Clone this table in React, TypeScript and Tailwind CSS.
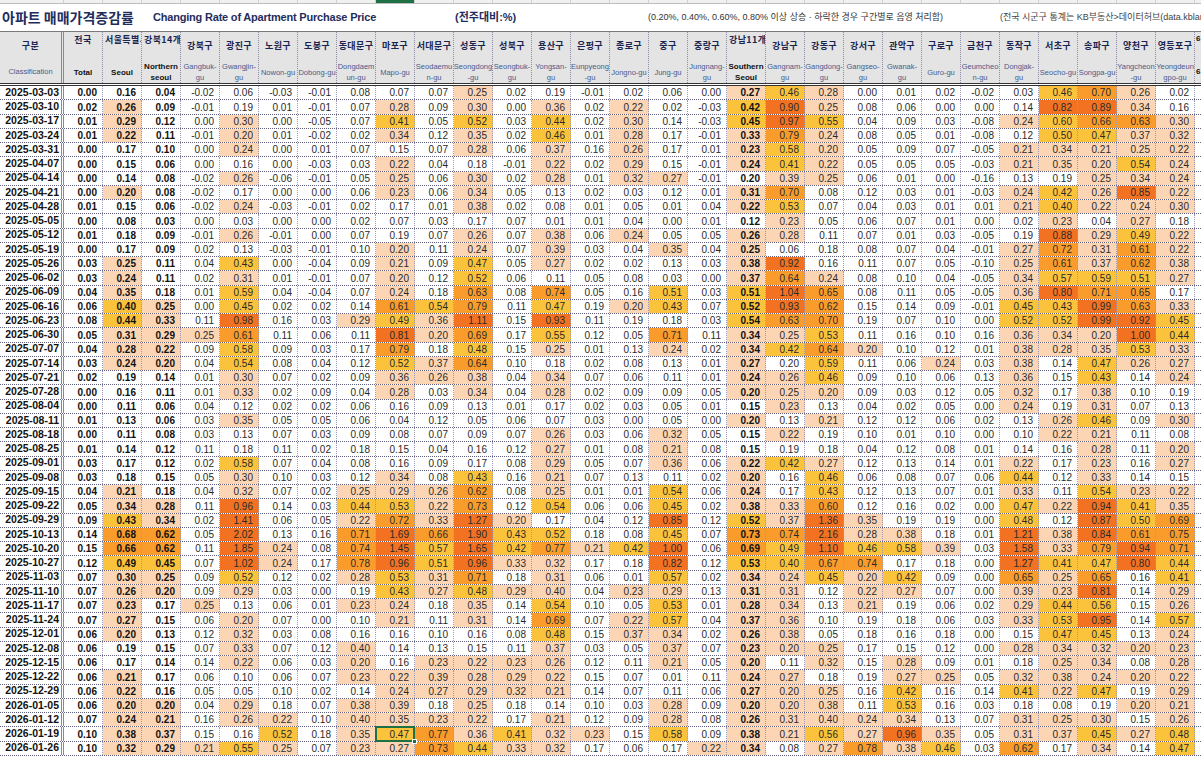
import React from 'react';

type Col = { ko: string; en: string[]; top?: boolean };

const COLS: Col[] = [
  { ko: '전국', en: ['Total'], top: true },
  { ko: '서울특별시', en: ['Seoul'], top: true },
  { ko: '강북14개구', en: ['Northern', 'seoul'], top: true },
  { ko: '강북구', en: ['Gangbuk-', 'gu'] },
  { ko: '광진구', en: ['Gwangjin-', 'gu'] },
  { ko: '노원구', en: ['Nowon-gu'] },
  { ko: '도봉구', en: ['Dobong-gu'] },
  { ko: '동대문구', en: ['Dongdaem', 'un-gu'] },
  { ko: '마포구', en: ['Mapo-gu'] },
  { ko: '서대문구', en: ['Seodaemu', 'n-gu'] },
  { ko: '성동구', en: ['Seongdong', '-gu'] },
  { ko: '성북구', en: ['Seongbuk-', 'gu'] },
  { ko: '용산구', en: ['Yongsan-', 'gu'] },
  { ko: '은평구', en: ['Eunpyeong', '-gu'] },
  { ko: '종로구', en: ['Jongno-gu'] },
  { ko: '중구', en: ['Jung-gu'] },
  { ko: '중랑구', en: ['Jungnang-', 'gu'] },
  { ko: '강남11개구', en: ['Southern', 'Seoul'], top: true },
  { ko: '강남구', en: ['Gangnam-', 'gu'] },
  { ko: '강동구', en: ['Gangdong-', 'gu'] },
  { ko: '강서구', en: ['Gangseo-', 'gu'] },
  { ko: '관악구', en: ['Gwanak-', 'gu'] },
  { ko: '구로구', en: ['Guro-gu'] },
  { ko: '금천구', en: ['Geumcheo', 'n-gu'] },
  { ko: '동작구', en: ['Dongjak-', 'gu'] },
  { ko: '서초구', en: ['Seocho-gu'] },
  { ko: '송파구', en: ['Songpa-gu'] },
  { ko: '양천구', en: ['Yangcheon', '-gu'] },
  { ko: '영등포구', en: ['Yeongdeun', 'gpo-gu'] },
];

const BOLD = new Set([0, 1, 2, 17]);

const RAW = `2025-03-03 0.00 0.16 0.04 -0.02 0.06 -0.03 -0.01 0.08 0.07 0.07 0.25 0.02 0.19 -0.01 0.02 0.06 0.00 0.27 0.46 0.28 0.00 0.01 0.02 -0.02 0.03 0.46 0.70 0.26 0.02
2025-03-10 0.02 0.26 0.09 -0.01 0.19 0.01 -0.01 0.07 0.28 0.09 0.30 0.00 0.36 0.02 0.22 0.02 -0.03 0.42 0.90 0.25 0.08 0.06 0.00 0.00 0.14 0.82 0.89 0.34 0.16
2025-03-17 0.01 0.29 0.12 0.00 0.30 0.00 -0.05 0.07 0.41 0.05 0.52 0.03 0.44 0.02 0.30 0.14 -0.03 0.45 0.97 0.55 0.04 0.09 0.03 -0.08 0.24 0.60 0.66 0.63 0.30
2025-03-24 0.01 0.22 0.11 -0.01 0.20 0.01 -0.02 0.02 0.34 0.12 0.35 0.02 0.46 0.01 0.28 0.17 -0.01 0.33 0.79 0.24 0.08 0.05 0.01 -0.08 0.12 0.50 0.47 0.37 0.32
2025-03-31 0.00 0.17 0.10 0.00 0.24 0.00 0.01 0.07 0.15 0.07 0.28 0.06 0.37 0.16 0.26 0.17 0.01 0.23 0.58 0.20 0.05 0.09 0.07 -0.05 0.21 0.34 0.21 0.25 0.22
2025-04-07 0.00 0.15 0.06 0.00 0.16 0.00 -0.03 0.03 0.22 0.04 0.18 -0.01 0.22 0.02 0.29 0.15 -0.01 0.24 0.41 0.22 0.05 0.05 0.05 -0.03 0.21 0.35 0.20 0.54 0.24
2025-04-14 0.00 0.14 0.08 -0.02 0.26 -0.06 -0.01 0.05 0.25 0.06 0.30 0.02 0.28 0.01 0.32 0.27 -0.01 0.20 0.39 0.25 0.06 0.01 0.00 -0.16 0.13 0.19 0.25 0.34 0.24
2025-04-21 0.00 0.20 0.08 -0.02 0.17 0.00 0.00 0.06 0.23 0.06 0.34 0.05 0.13 0.02 0.03 0.12 0.01 0.31 0.70 0.08 0.12 0.03 0.01 -0.03 0.24 0.42 0.26 0.85 0.22
2025-04-28 0.01 0.15 0.06 -0.02 0.24 -0.03 -0.01 0.02 0.17 0.01 0.38 0.02 0.08 0.01 0.05 0.01 0.04 0.22 0.53 0.07 0.04 0.03 0.01 0.01 0.21 0.40 0.22 0.24 0.30
2025-05-05 0.00 0.08 0.03 0.00 0.03 0.00 0.00 0.02 0.07 0.03 0.17 0.07 0.01 0.01 0.04 0.00 0.01 0.12 0.23 0.05 0.06 0.07 0.01 0.00 0.02 0.23 0.04 0.27 0.18
2025-05-12 0.01 0.18 0.09 -0.01 0.26 -0.01 0.00 0.07 0.19 0.07 0.26 0.07 0.38 0.06 0.24 0.05 0.05 0.26 0.28 0.11 0.07 0.01 0.03 -0.05 0.19 0.88 0.29 0.49 0.22
2025-05-19 0.00 0.17 0.09 0.02 0.13 -0.03 -0.01 0.10 0.20 0.11 0.24 0.07 0.39 0.03 0.04 0.35 0.04 0.25 0.06 0.18 0.08 0.07 0.04 -0.01 0.27 0.72 0.31 0.61 0.22
2025-05-26 0.03 0.25 0.11 0.04 0.43 0.00 -0.04 0.09 0.21 0.09 0.47 0.05 0.27 0.02 0.02 0.13 0.03 0.38 0.92 0.16 0.11 0.07 0.05 -0.10 0.25 0.61 0.37 0.62 0.38
2025-06-02 0.03 0.24 0.11 0.02 0.31 0.01 -0.01 0.07 0.20 0.12 0.52 0.06 0.11 0.05 0.08 0.03 0.00 0.37 0.64 0.24 0.08 0.10 0.04 -0.05 0.34 0.57 0.59 0.51 0.27
2025-06-09 0.04 0.35 0.18 0.01 0.59 0.04 -0.04 0.07 0.24 0.18 0.63 0.08 0.74 0.05 0.16 0.51 0.03 0.51 1.04 0.65 0.08 0.11 0.05 -0.05 0.36 0.80 0.71 0.65 0.17
2025-06-16 0.06 0.40 0.25 0.00 0.45 0.02 0.02 0.14 0.61 0.54 0.79 0.11 0.47 0.19 0.20 0.43 0.07 0.52 0.93 0.62 0.15 0.14 0.09 -0.01 0.45 0.43 0.99 0.63 0.33
2025-06-23 0.08 0.44 0.33 0.11 0.98 0.16 0.03 0.29 0.49 0.36 1.11 0.15 0.93 0.11 0.19 0.18 0.03 0.54 0.63 0.70 0.19 0.07 0.10 0.00 0.52 0.52 0.99 0.92 0.45
2025-06-30 0.05 0.31 0.29 0.25 0.61 0.11 0.06 0.11 0.81 0.20 0.69 0.17 0.55 0.12 0.05 0.71 0.11 0.34 0.25 0.53 0.11 0.16 0.10 0.16 0.36 0.34 0.20 1.00 0.44
2025-07-07 0.04 0.28 0.22 0.09 0.58 0.09 0.03 0.17 0.79 0.18 0.48 0.15 0.25 0.01 0.13 0.24 0.02 0.34 0.42 0.64 0.20 0.10 0.12 0.01 0.38 0.28 0.35 0.53 0.33
2025-07-14 0.03 0.24 0.20 0.04 0.54 0.08 0.04 0.12 0.52 0.37 0.64 0.10 0.18 0.02 0.08 0.13 0.01 0.27 0.20 0.59 0.11 0.06 0.24 0.03 0.38 0.14 0.47 0.26 0.27
2025-07-21 0.02 0.19 0.14 0.01 0.30 0.07 0.02 0.09 0.36 0.26 0.38 0.04 0.34 0.07 0.06 0.11 0.01 0.24 0.26 0.46 0.09 0.10 0.06 0.13 0.36 0.15 0.43 0.14 0.24
2025-07-28 0.00 0.16 0.11 0.01 0.33 0.02 0.09 0.04 0.28 0.03 0.34 0.04 0.28 0.02 0.09 0.09 0.05 0.20 0.25 0.20 0.09 0.03 0.12 0.05 0.32 0.17 0.38 0.10 0.19
2025-08-04 0.00 0.11 0.06 0.04 0.12 0.02 0.02 0.06 0.16 0.09 0.13 0.01 0.17 0.02 0.03 0.05 0.01 0.15 0.23 0.13 0.04 0.02 0.05 0.00 0.24 0.19 0.31 0.07 0.13
2025-08-11 0.01 0.13 0.06 0.03 0.35 0.05 0.05 0.06 0.04 0.12 0.05 0.06 0.07 0.03 0.00 0.05 0.00 0.20 0.13 0.21 0.12 0.12 0.06 0.02 0.13 0.26 0.46 0.09 0.30
2025-08-18 0.00 0.11 0.08 0.03 0.13 0.07 0.03 0.09 0.08 0.07 0.09 0.07 0.26 0.03 0.06 0.32 0.05 0.15 0.22 0.19 0.10 0.01 0.10 0.00 0.10 0.22 0.21 0.11 0.08
2025-08-25 0.01 0.14 0.12 0.11 0.18 0.11 0.02 0.18 0.15 0.04 0.16 0.12 0.27 0.01 0.08 0.21 0.08 0.15 0.19 0.18 0.04 0.12 0.08 0.01 0.14 0.16 0.28 0.11 0.20
2025-09-01 0.03 0.17 0.12 0.02 0.58 0.07 0.04 0.08 0.16 0.09 0.17 0.08 0.29 0.05 0.07 0.36 0.06 0.22 0.42 0.27 0.12 0.13 0.14 0.01 0.22 0.17 0.23 0.16 0.27
2025-09-08 0.03 0.18 0.15 0.05 0.30 0.10 0.03 0.12 0.34 0.08 0.43 0.16 0.21 0.07 0.13 0.11 0.02 0.20 0.16 0.46 0.06 0.08 0.07 0.06 0.44 0.12 0.33 0.14 0.15
2025-09-15 0.04 0.21 0.18 0.04 0.32 0.07 0.02 0.25 0.29 0.26 0.62 0.08 0.25 0.01 0.01 0.54 0.06 0.24 0.17 0.43 0.12 0.13 0.07 0.01 0.33 0.11 0.54 0.23 0.22
2025-09-22 0.05 0.34 0.28 0.11 0.96 0.14 0.03 0.44 0.53 0.22 0.73 0.12 0.54 0.06 0.06 0.45 0.02 0.38 0.33 0.60 0.12 0.16 0.02 0.00 0.47 0.22 0.94 0.41 0.35
2025-09-29 0.09 0.43 0.34 0.02 1.41 0.06 0.05 0.22 0.72 0.33 1.27 0.20 0.17 0.04 0.12 0.85 0.12 0.52 0.37 1.36 0.35 0.19 0.19 0.00 0.48 0.12 0.87 0.50 0.69
2025-10-13 0.14 0.68 0.62 0.05 2.02 0.13 0.16 0.71 1.69 0.66 1.90 0.43 0.52 0.18 0.08 0.45 0.07 0.73 0.74 2.16 0.28 0.38 0.18 0.01 1.21 0.38 0.84 0.61 0.75
2025-10-20 0.15 0.66 0.62 0.11 1.85 0.24 0.08 0.74 1.45 0.57 1.65 0.42 0.77 0.21 0.42 1.00 0.06 0.69 0.49 1.10 0.46 0.58 0.39 0.03 1.58 0.33 0.79 0.94 0.71
2025-10-27 0.12 0.49 0.45 0.07 1.02 0.24 0.17 0.78 0.96 0.51 0.96 0.33 0.32 0.17 0.18 0.82 0.12 0.53 0.40 0.67 0.74 0.17 0.18 0.00 1.27 0.41 0.47 0.80 0.44
2025-11-03 0.07 0.30 0.25 0.09 0.52 0.12 0.02 0.28 0.53 0.31 0.71 0.18 0.31 0.06 0.01 0.57 0.02 0.34 0.24 0.45 0.20 0.42 0.09 0.00 0.65 0.25 0.65 0.16 0.41
2025-11-10 0.07 0.26 0.20 0.09 0.29 0.03 0.00 0.19 0.43 0.27 0.48 0.29 0.40 0.04 0.23 0.29 0.13 0.31 0.31 0.12 0.22 0.27 0.07 0.00 0.39 0.23 0.81 0.14 0.29
2025-11-17 0.07 0.23 0.17 0.25 0.13 0.06 0.01 0.23 0.24 0.18 0.35 0.14 0.54 0.10 0.05 0.53 0.01 0.28 0.34 0.13 0.21 0.19 0.06 0.02 0.29 0.44 0.56 0.15 0.26
2025-11-24 0.07 0.27 0.15 0.06 0.20 0.07 0.00 0.10 0.21 0.11 0.31 0.14 0.69 0.07 0.22 0.57 0.04 0.37 0.36 0.10 0.19 0.18 0.06 0.03 0.33 0.53 0.95 0.14 0.57
2025-12-01 0.06 0.20 0.13 0.12 0.32 0.03 0.08 0.16 0.16 0.10 0.16 0.08 0.48 0.15 0.37 0.34 0.02 0.26 0.38 0.05 0.18 0.16 0.18 0.00 0.15 0.47 0.45 0.13 0.24
2025-12-08 0.06 0.19 0.15 0.07 0.33 0.07 0.12 0.40 0.14 0.13 0.15 0.11 0.37 0.03 0.05 0.37 0.07 0.23 0.20 0.25 0.17 0.15 0.12 0.00 0.28 0.34 0.32 0.20 0.23
2025-12-15 0.06 0.17 0.14 0.14 0.22 0.06 0.03 0.20 0.16 0.23 0.22 0.23 0.26 0.12 0.11 0.21 0.05 0.20 0.11 0.32 0.15 0.28 0.09 0.01 0.18 0.25 0.34 0.08 0.28
2025-12-22 0.06 0.21 0.17 0.06 0.10 0.06 0.07 0.23 0.22 0.39 0.28 0.29 0.22 0.15 0.07 0.01 0.11 0.24 0.27 0.18 0.19 0.27 0.25 0.05 0.32 0.38 0.24 0.20 0.22
2025-12-29 0.06 0.22 0.16 0.05 0.05 0.10 0.02 0.14 0.24 0.27 0.29 0.32 0.21 0.14 0.07 0.11 0.06 0.27 0.20 0.25 0.16 0.42 0.16 0.14 0.41 0.22 0.47 0.19 0.29
2026-01-05 0.06 0.20 0.20 0.04 0.29 0.18 0.07 0.38 0.39 0.18 0.25 0.18 0.14 0.10 0.03 0.28 0.09 0.20 0.20 0.38 0.11 0.53 0.16 0.03 0.18 0.08 0.19 0.20 0.21
2026-01-12 0.07 0.24 0.21 0.16 0.26 0.22 0.10 0.40 0.35 0.23 0.22 0.17 0.21 0.12 0.09 0.28 0.08 0.26 0.31 0.40 0.24 0.34 0.13 0.07 0.31 0.25 0.30 0.15 0.26
2026-01-19 0.10 0.38 0.37 0.15 0.16 0.52 0.18 0.35 0.47 0.77 0.36 0.41 0.32 0.23 0.15 0.58 0.09 0.38 0.21 0.56 0.27 0.96 0.35 0.05 0.31 0.37 0.45 0.27 0.48
2026-01-26 0.10 0.32 0.29 0.21 0.55 0.25 0.07 0.23 0.27 0.73 0.44 0.33 0.32 0.17 0.06 0.17 0.22 0.34 0.08 0.27 0.78 0.38 0.46 0.03 0.62 0.17 0.34 0.14 0.47`;

const ROWS = RAW.split('\n').map((line) => {
  const parts = line.trim().split(/\s+/);
  return { date: parts[0], vals: parts.slice(1) };
});

const OVERRIDE: Record<string, number> = {
  '2025-04-14:17': 0,
  '2025-07-14:18': 0,
  '2025-03-17:25': 2,
  '2025-11-10:12': 1,
  '2025-12-08:7': 1,
  '2026-01-12:7': 1,
  '2026-01-12:19': 1,
};

const FILLS = ['', 'bg-[#fcd5b5]', 'bg-[#fbc33c]', 'bg-[#f99c2c]', 'bg-[#f27222]'];

function level(date: string, c: number, s: string) {
  const key = `${date}:${c}`;
  if (key in OVERRIDE) return OVERRIDE[key];
  const v = parseFloat(s);
  if (v >= 0.8) return 4;
  if (v >= 0.6) return 3;
  if (v >= 0.4) return 2;
  if (v >= 0.2) return 1;
  return 0;
}

function HeaderCell({ col, i }: { col: Col; i: number }) {
  const strong = BOLD.has(i);
  return (
    <div className="w-[39px] shrink-0 flex flex-col border-r border-dotted border-[#8e8eab] overflow-hidden">
      <div
        className={`h-[27px] flex overflow-hidden whitespace-nowrap font-['Noto_Sans_CJK_KR',sans-serif] font-bold text-[9px] tracking-[0.4px] text-[#1b2650] ${
          col.top ? (i === 0 ? 'justify-center items-start pt-[1px]' : 'justify-start items-start pt-[1px] pl-[2px]') : 'justify-center items-center'
        }`}
      >
        <span className="block overflow-hidden">{col.ko}</span>
      </div>
      <div
        className={`flex-1 flex flex-col items-center justify-center pt-[2px] leading-[11px] text-center whitespace-nowrap ${
          strong ? 'text-[8px] font-bold text-[#111]' : 'text-[7.5px] text-[#4a5a8c]'
        }`}
      >
        {col.en.map((l, k) => (
          <span key={k}>{l}</span>
        ))}
      </div>
    </div>
  );
}

export default function App() {
  return (
    <div className="w-[1201px] h-[759px] overflow-hidden bg-white font-['Liberation_Sans','Noto_Sans_CJK_KR',sans-serif] text-[#1a1a1a]">
      {/* excel column header strip */}
      <div className="flex h-[4px] bg-[#f0f0f0] border-b border-[#bdbdbd]">
        <div className="w-[64px] shrink-0 border-r border-[#d0d0d0]" />
        {COLS.map((_, i) => (
          <div
            key={i}
            className={`w-[39px] shrink-0 border-r border-[#d0d0d0] ${i === 8 ? 'bg-[#1e7145]' : ''}`}
          />
        ))}
      </div>

      {/* title row */}
      <div className="flex items-center h-[27px] whitespace-nowrap overflow-hidden">
        <span className="w-[153px] shrink-0 pl-[2px] font-['Noto_Sans_CJK_KR',sans-serif] font-bold text-[14px] text-[#1f2d5c]">
          아파트 매매가격증감률
        </span>
        <span className="w-[302px] shrink-0 font-bold text-[11px] tracking-[-0.2px] text-[#1f2d5c]">
          Changing Rate of Apartment Purchase Price
        </span>
        <span className="w-[193px] shrink-0 font-bold text-[11px] text-[#1f2d5c]">(전주대비:%)</span>
        <span className="w-[352px] shrink-0 text-[9px] text-[#333]">
          (0.20%, 0.40%, 0.60%, 0.80% 이상 상승 · 하락한 경우 구간별로 음영 처리함)
        </span>
        <span className="min-w-0 flex-1 overflow-hidden text-[9px] text-[#444]">
          (전국 시군구 통계는 KB부동산&gt;데이터허브(data.kbland.kr)에서 확인 가능)
        </span>
      </div>

      {/* header */}
      <div className="flex h-[52px] bg-[#e4e4e4] border-t border-[#7a7a7a]">
        <div className="w-[64px] shrink-0 flex flex-col border-r-[3px] border-double border-[#8a8a8a]">
          <div className="h-[27px] flex items-center justify-center font-['Noto_Sans_CJK_KR',sans-serif] font-bold text-[9px] tracking-[0.4px] text-[#1b2650]">
            구분
          </div>
          <div className="flex-1 flex items-center justify-center pt-[2px] text-[7.5px] text-[#4a5a8c]">
            Classification
          </div>
        </div>
        {COLS.map((c, i) => (
          <HeaderCell key={i} col={c} i={i} />
        ))}
        <div className="flex-1 flex flex-col overflow-hidden font-bold text-[8px] text-[#111]">
          <div className="h-[27px] pt-[1px] pl-[1px]">6</div>
          <div className="flex-1 flex items-center pl-[1px] pt-[2px]">6</div>
        </div>
      </div>
      <div className="h-[3px] border-y border-[#333]" />

      {/* data rows */}
      <div className="flex flex-col">
        {ROWS.map((r, ri) => (
          <div key={ri} className="flex h-[14.25px] shrink-0 border-b border-dotted border-[#60607e]">
            <div className="w-[64px] shrink-0 flex items-center justify-end pr-[2px] font-bold text-[10.5px] text-[#111] border-r-[3px] border-double border-[#8a8a8a]">
              {r.date}
            </div>
            {r.vals.map((v, ci) => {
              const lv = level(r.date, ci, v);
              const selected = r.date === '2026-01-19' && ci === 8;
              return (
                <div
                  key={ci}
                  className={`relative w-[39px] shrink-0 flex items-end justify-end pr-[5px] pb-[1px] leading-[11px] text-[10px] border-r border-dotted border-[#9a9ab8] ${FILLS[lv]} ${
                    BOLD.has(ci) ? 'font-bold text-[#111]' : 'text-[#2a2a2a]'
                  }`}
                >
                  {v}
                  {selected && (
                    <>
                      <span className="absolute inset-[-1px] z-10 border-2 border-[#1e7145]" />
                      <span className="absolute right-[-3px] bottom-[-3px] z-20 w-[5px] h-[5px] bg-[#1e7145] border border-white" />
                    </>
                  )}
                </div>
              );
            })}
            <div className="flex-1" />
          </div>
        ))}
      </div>
    </div>
  );
}
